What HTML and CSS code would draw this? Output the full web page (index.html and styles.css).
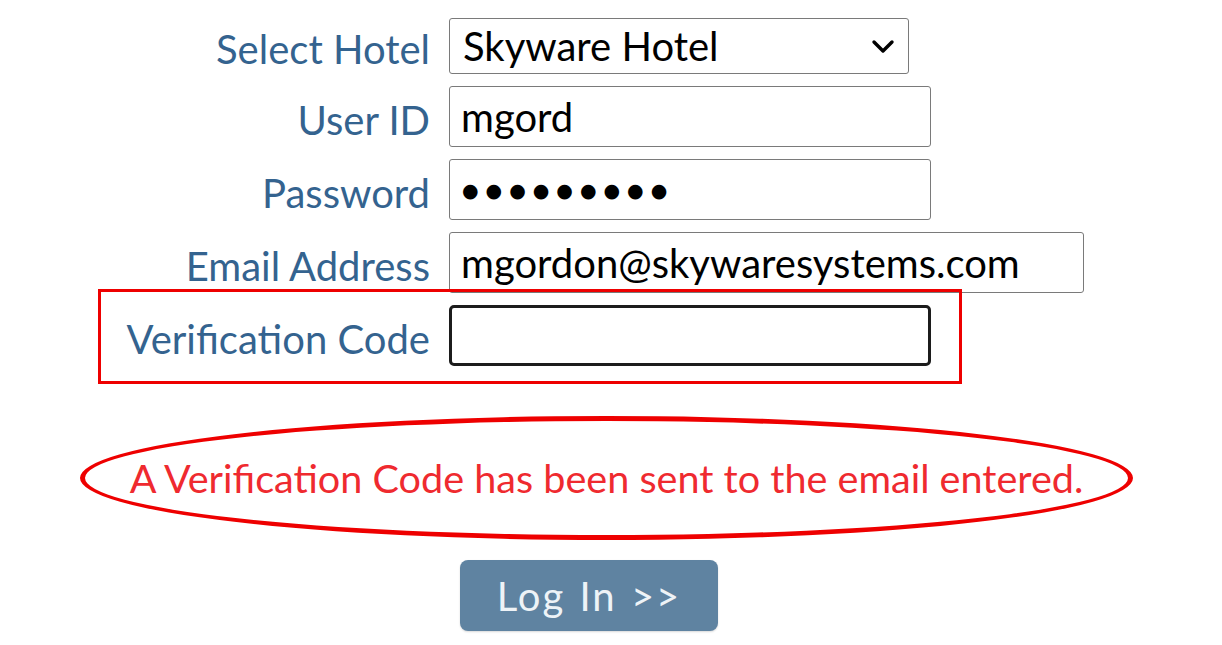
FILE: index.html
```html
<!DOCTYPE html>
<html lang="en">
<head>
<meta charset="utf-8">
<title>Log In</title>
<link rel="stylesheet" href="styles.css">
</head>
<body>
<div class="page">
  <form class="login">
    <div class="fields">
      <label class="label" for="hotel">Select Hotel</label>
      <div class="select-wrap">
        <select id="hotel" class="control select">
          <option>Skyware Hotel</option>
        </select>
        <svg class="chevron" viewBox="0 0 24 16" width="24" height="16" aria-hidden="true">
          <path d="M3 3 L12 12 L21 3" fill="none" stroke="#000" stroke-width="3.4" stroke-linecap="round" stroke-linejoin="round"/>
        </svg>
      </div>

      <label class="label" for="uid">User ID</label>
      <input id="uid" class="control short" type="text" value="mgord">

      <label class="label" for="pw">Password</label>
      <div class="control short dots">●●●●●●●●●</div>

      <label class="label" for="email">Email Address</label>
      <input id="email" class="control long" type="text" value="mgordon@skywaresystems.com">

      <label class="label" for="code">Verification Code</label>
      <input id="code" class="control short focused" type="text" value="">
    </div>
    <div class="highlight-box"></div>

    <div class="message-ring">
      <p class="message">A Verification Code has been sent to the email entered.</p>
    </div>

    <div class="actions">
      <button type="button" class="btn">Log In &gt;&gt;</button>
    </div>
  </form>
</div>
</body>
</html>
```

FILE: styles.css
```css
* { box-sizing: border-box; }

html, body {
  margin: 0;
  padding: 0;
  background: #ffffff;
}

body {
  font-family: Lato, "Open Sans", sans-serif;
  width: 1222px;
  height: 645px;
  overflow: hidden;
}

.login {
  position: relative;
  padding-top: 18px;
}

.fields {
  display: grid;
  grid-template-columns: 430px auto;
  column-gap: 19px;
  row-gap: 12px;
  align-items: center;
  justify-items: start;
}

.label {
  justify-self: end;
  font-size: 40px;
  color: #34638f;
  line-height: 1;
  padding-top: 6px;
}

.control {
  font-family: Lato, "Open Sans", sans-serif;
  font-size: 40px;
  color: #000;
  height: 61px;
  border: 1px solid #7a7a7a;
  border-radius: 3px;
  padding: 0 11px;
  background: #fff;
  outline: none;
}

.short { width: 482px; }
.long { width: 635px; }

.select-wrap {
  position: relative;
  width: 460px;
}

.select {
  appearance: none;
  -webkit-appearance: none;
  width: 460px;
  height: 56px;
  padding-left: 13px;
}

.chevron {
  position: absolute;
  right: 14px;
  top: 21px;
  pointer-events: none;
}

.dots {
  display: flex;
  align-items: center;
  font-family: "DejaVu Sans", sans-serif;
  font-size: 19px;
  letter-spacing: 7px;
  padding-left: 12px;
}

.focused {
  border: 3px solid #1c1c1c;
  border-radius: 5px;
}

.highlight-box {
  position: absolute;
  left: 98px;
  top: 289px;
  width: 864px;
  height: 95px;
  border: 3px solid #ee0000;
  pointer-events: none;
}

.message-ring {
  margin: 50px 0 0 80px;
  width: 1053px;
  height: 124px;
  border: 5px solid #ee0000;
  border-radius: 50%;
  display: flex;
  align-items: center;
  justify-content: center;
}

.message {
  margin: 0;
  font-size: 39.6px;
  color: #ef2a2f;
  line-height: 1;
}

.actions {
  display: flex;
  padding-left: 460px;
  margin-top: 20px;
}

.btn {
  width: 258px;
  height: 71px;
  background: #5f83a1;
  color: #eef3f7;
  border: none;
  border-radius: 8px;
  font-family: Lato, "Open Sans", sans-serif;
  font-size: 40px;
  letter-spacing: 2px;
  word-spacing: 2px;
  box-shadow: 0 1px 2px rgba(0,0,0,0.15);
}
```
